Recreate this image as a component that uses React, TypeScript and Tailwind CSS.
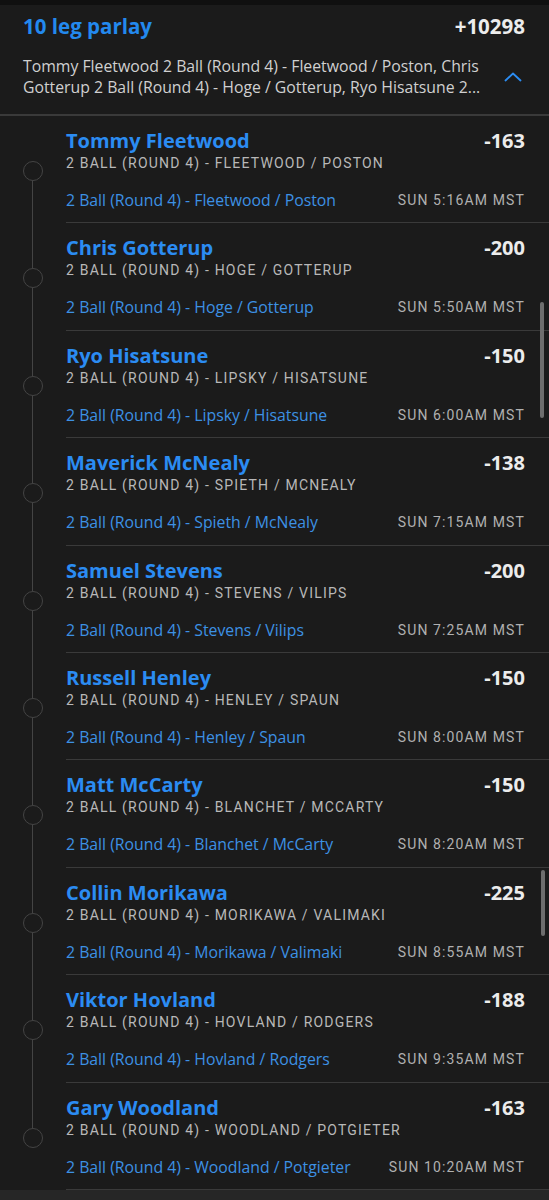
import React from "react";

const legs = [
  { name: "Tommy Fleetwood", odds: "-163", sub: "2 BALL (ROUND 4) - FLEETWOOD / POSTON", market: "2 Ball (Round 4) - Fleetwood / Poston", time: "SUN 5:16AM MST" },
  { name: "Chris Gotterup", odds: "-200", sub: "2 BALL (ROUND 4) - HOGE / GOTTERUP", market: "2 Ball (Round 4) - Hoge / Gotterup", time: "SUN 5:50AM MST" },
  { name: "Ryo Hisatsune", odds: "-150", sub: "2 BALL (ROUND 4) - LIPSKY / HISATSUNE", market: "2 Ball (Round 4) - Lipsky / Hisatsune", time: "SUN 6:00AM MST" },
  { name: "Maverick McNealy", odds: "-138", sub: "2 BALL (ROUND 4) - SPIETH / MCNEALY", market: "2 Ball (Round 4) - Spieth / McNealy", time: "SUN 7:15AM MST" },
  { name: "Samuel Stevens", odds: "-200", sub: "2 BALL (ROUND 4) - STEVENS / VILIPS", market: "2 Ball (Round 4) - Stevens / Vilips", time: "SUN 7:25AM MST" },
  { name: "Russell Henley", odds: "-150", sub: "2 BALL (ROUND 4) - HENLEY / SPAUN", market: "2 Ball (Round 4) - Henley / Spaun", time: "SUN 8:00AM MST" },
  { name: "Matt McCarty", odds: "-150", sub: "2 BALL (ROUND 4) - BLANCHET / MCCARTY", market: "2 Ball (Round 4) - Blanchet / McCarty", time: "SUN 8:20AM MST" },
  { name: "Collin Morikawa", odds: "-225", sub: "2 BALL (ROUND 4) - MORIKAWA / VALIMAKI", market: "2 Ball (Round 4) - Morikawa / Valimaki", time: "SUN 8:55AM MST" },
  { name: "Viktor Hovland", odds: "-188", sub: "2 BALL (ROUND 4) - HOVLAND / RODGERS", market: "2 Ball (Round 4) - Hovland / Rodgers", time: "SUN 9:35AM MST" },
  { name: "Gary Woodland", odds: "-163", sub: "2 BALL (ROUND 4) - WOODLAND / POTGIETER", market: "2 Ball (Round 4) - Woodland / Potgieter", time: "SUN 10:20AM MST" },
];

const sans = { fontFamily: '"Open Sans", "Liberation Sans", sans-serif' };
const cond = { fontFamily: 'Roboto, "Liberation Sans", sans-serif' };

function Leg({ leg, index, total }: { leg: (typeof legs)[number]; index: number; total: number }) {
  const first = index === 0;
  const last = index === total - 1;
  return (
    <div className="flex h-[107.4px]">
      <div className="relative w-[66px] shrink-0">
        {!first && <div className="absolute left-[32px] top-0 h-[45px] w-px bg-[#444]" />}
        <div className="absolute left-[23px] top-[45px] h-[20px] w-[20px] rounded-full border-[1.5px] border-[#444]" />
        {!last && <div className="absolute left-[32px] top-[65px] bottom-0 w-px bg-[#444]" />}
      </div>
      <div className="flex min-w-0 flex-1 flex-col border-b border-[#3a3a3a] pr-[24px] pt-[13px]">
        <div className="flex items-center justify-between">
          <span className="text-[20px] font-bold leading-[24px] text-[#2b8cf2]" style={sans}>{leg.name}</span>
          <span className="text-[20px] font-bold leading-[24px] text-[#ececec]" style={sans}>{leg.odds}</span>
        </div>
        <div className="mt-[1px] text-[14px] leading-[18px] tracking-[0.085em] text-[#b8b8b8]" style={cond}>{leg.sub}</div>
        <div className="mt-[18px] flex items-center justify-between">
          <span className="text-[15.8px] leading-[20px] text-[#3d91e4]" style={sans}>{leg.market}</span>
          <span className="text-[14px] leading-[20px] tracking-[0.08em] text-[#b0b0b0]" style={cond}>{leg.time}</span>
        </div>
      </div>
    </div>
  );
}

export default function App() {
  return (
    <div className="relative h-[1200px] w-[549px] overflow-hidden bg-[#1b1b1b]">
      <div className="h-[5px] bg-[#101010]" />
      <div className="px-[23px] pt-[7px]">
        <div className="flex items-center justify-between pr-[1px]">
          <span className="text-[20.5px] font-bold leading-[28px] text-[#2389ee]" style={sans}>10 leg parlay</span>
          <span className="text-[20.5px] font-bold leading-[28px] text-[#ececec]" style={sans}>+10298</span>
        </div>
        <div className="mt-[16px] flex items-center justify-between">
          <div className="w-[462px] text-[15.8px] leading-[21px] text-[#d0d0d0]" style={sans}>
            <div className="whitespace-nowrap">Tommy Fleetwood 2 Ball (Round 4) - Fleetwood / Poston, Chris</div>
            <div className="whitespace-nowrap">Gotterup 2 Ball (Round 4) - Hoge / Gotterup, Ryo Hisatsune 2...</div>
          </div>
          <svg width="18" height="10" viewBox="0 0 18 10" className="mr-[4px]" fill="none">
            <path d="M1.5 8.5 L9 1.5 L16.5 8.5" stroke="#2b8cf2" strokeWidth="1.8" strokeLinecap="round" strokeLinejoin="round" />
          </svg>
        </div>
      </div>
      <div className="mt-[16px] h-[2px] bg-[#3a3a3a]" />
      <div className="flex flex-col">
        {legs.map((leg, i) => (
          <Leg key={leg.name} leg={leg} index={i} total={legs.length} />
        ))}
      </div>
      <div className="h-[20px] bg-[#262626]" />
      <div className="absolute left-[540px] top-[302px] h-[116px] w-[4px] rounded-full bg-[#6e6e6e]" />
      <div className="absolute left-[541px] top-[870px] h-[66px] w-[4px] rounded-full bg-[#6e6e6e]" />
    </div>
  );
}
